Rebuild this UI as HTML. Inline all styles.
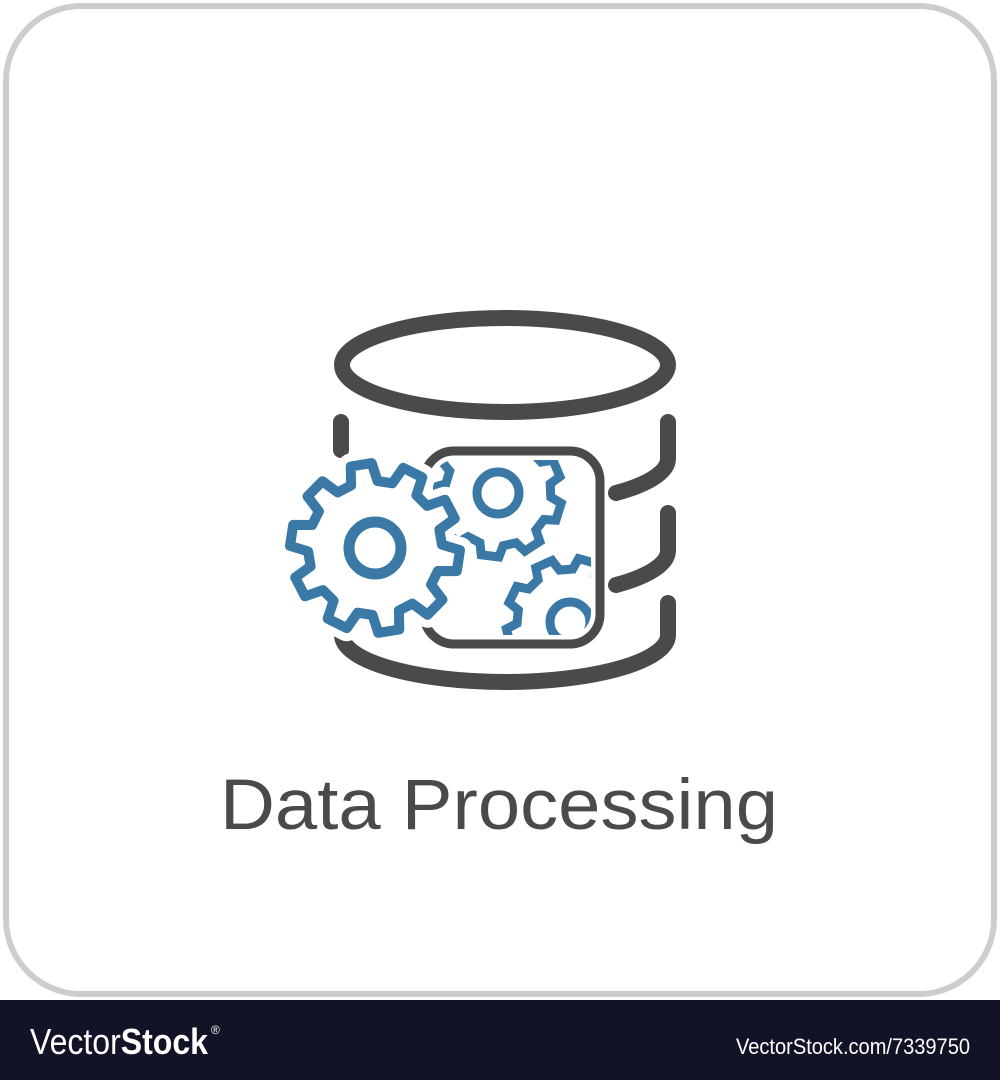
<!DOCTYPE html>
<html><head><meta charset="utf-8"><style>
html,body{margin:0;padding:0;background:#fff;width:1000px;height:1080px;overflow:hidden}
svg{display:block}
</style></head><body>
<svg width="1000" height="1080" viewBox="0 0 1000 1080" xmlns="http://www.w3.org/2000/svg">
<rect x="0" y="0" width="1000" height="1080" fill="#fff"/>
<rect x="6" y="6" width="988" height="988" rx="75" fill="#fff" stroke="#cdcdcd" stroke-width="6"/>
<defs>
<clipPath id="inner"><rect x="433" y="460" width="158" height="175" rx="22"/></clipPath>
</defs>
<g fill="none" stroke="#4a4a4a" stroke-width="16" stroke-linecap="round">
<ellipse cx="505" cy="365" rx="163" ry="47"/>
<path d="M341 422 V450"/>
<path d="M668 422 V459 A163 47 0 0 1 616 493"/>
<path d="M668 513 V551 A163 47 0 0 1 616 585"/>
<path d="M668 603 V635 A163 47 0 0 1 342 635"/>
</g>
<rect x="424" y="451" width="176" height="193" rx="30" fill="#fff" stroke="#4a4a4a" stroke-width="9"/>
<g clip-path="url(#inner)" fill="none" stroke="#3a78a6" stroke-width="9">
<path id="g1" d=""/>
<circle cx="498" cy="493" r="21"/>
<path id="g2" d=""/>
<circle cx="570" cy="622" r="20"/>
</g>
<path id="gbw" d="" fill="#fff" stroke="#fff" stroke-width="26" stroke-linejoin="round"/>
<path id="gb" d="" fill="#fff" stroke="#3a78a6" stroke-width="10" stroke-linejoin="round"/>
<circle cx="375" cy="548" r="26" fill="none" stroke="#3a78a6" stroke-width="11"/>
<text x="220" y="829" textLength="558" lengthAdjust="spacingAndGlyphs" font-family="Liberation Sans, sans-serif" font-size="71" fill="#4a4a4a">Data Processing</text>
<rect x="0" y="1000" width="1000" height="80" fill="#121326"/>
<text x="30" y="1054" font-family="Liberation Sans, sans-serif" font-size="36" fill="#fff" textLength="178" lengthAdjust="spacingAndGlyphs">Vector<tspan font-weight="bold">Stock</tspan></text>
<text x="211" y="1034" font-family="Liberation Sans, sans-serif" font-size="12" fill="#fff">®</text>
<text x="970" y="1054" text-anchor="end" font-family="Liberation Sans, sans-serif" font-size="22" fill="#fff" textLength="234" lengthAdjust="spacingAndGlyphs">VectorStock.com/7339750</text>
</svg>
<script>
function gear(cx,cy,n,ro,ri,rot){
  var d="",step=2*Math.PI/n;
  for(var i=0;i<n;i++){
    var a=rot+i*step;
    var pts=[[ri,a-step*0.32],[ro,a-step*0.2],[ro,a+step*0.2],[ri,a+step*0.32]];
    pts.forEach(function(p,j){
      var x=cx+p[0]*Math.cos(p[1]),y=cy+p[0]*Math.sin(p[1]);
      d+=(i==0&&j==0?"M":"L")+x.toFixed(1)+" "+y.toFixed(1)+" ";
    });
  }
  return d+"Z";
}
var big=gear(375,548,10,85,67,0.15);
document.getElementById('gb').setAttribute('d',big);
document.getElementById('gbw').setAttribute('d',big);
document.getElementById('g1').setAttribute('d',gear(498,493,9,64,53,0.3));
document.getElementById('g2').setAttribute('d',gear(570,622,9,64,53,0.1));
</script>
</body></html>
